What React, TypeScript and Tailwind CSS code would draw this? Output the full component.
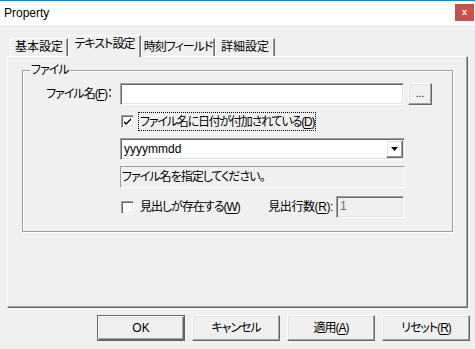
import React from "react";

const sunken =
  "border-t border-l border-b border-r border-t-[#a0a0a0] border-l-[#a0a0a0] border-b-white border-r-white shadow-[inset_1px_1px_0_#696969,inset_-1px_-1px_0_#e3e3e3]";
const raised =
  "border-t border-l border-b border-r border-t-white border-l-white border-b-[#696969] border-r-[#696969] shadow-[inset_-1px_-1px_0_#a0a0a0,inset_1px_1px_0_#e3e3e3]";

function U({ children }: { children: React.ReactNode }) {
  return <span className="underline underline-offset-2 decoration-1">{children}</span>;
}

function Checkbox({ checked }: { checked?: boolean }) {
  return (
    <div className={`w-[13px] h-[13px] bg-white shrink-0 flex items-center justify-center ${sunken}`}>
      {checked && (
        <svg width="9" height="9" viewBox="0 0 9 9">
          <path d="M1 4 L3 6 L8 1 L8 3 L3 8 L1 6 Z" fill="#000" />
        </svg>
      )}
    </div>
  );
}

function Tab({ children, w, active, tight }: { children: React.ReactNode; w: string; active?: boolean; tight?: boolean }) {
  const track = tight ? "tracking-[-1px]" : "tracking-normal";
  if (active) {
    return (
      <div
        className={`relative z-10 -mb-px ${w} ${track} h-[22px] whitespace-nowrap bg-[#f0f0f0] border-t border-l border-r border-t-white border-l-white border-r-[#696969] shadow-[inset_-1px_0_0_#a0a0a0] text-center leading-[14px] pt-px`}
      >
        {children}
      </div>
    );
  }
  return (
    <div
      className={`${w} ${track} h-[18px] whitespace-nowrap bg-[#f0f0f0] border-t border-l border-r border-t-white border-l-white border-r-[#696969] shadow-[inset_-1px_0_0_#a0a0a0] text-center leading-[14px] pt-px`}
    >
      {children}
    </div>
  );
}

function Button({ children, def }: { children: React.ReactNode; def?: boolean }) {
  if (def) {
    return (
      <div className="w-[88px] h-[26px] border border-[#646464] flex">
        <div className={`flex-1 flex items-center justify-center ${raised}`}>{children}</div>
      </div>
    );
  }
  return (
    <div className={`w-[88px] h-[26px] flex items-center justify-center ${raised}`}>{children}</div>
  );
}

export default function App() {
  return (
    <div className="w-[475px] h-[349px] bg-[#f0f0f0] text-[12px] text-black font-['Liberation_Sans','Noto_Sans_CJK_JP',sans-serif] [font-feature-settings:'palt'] tracking-[-1px] overflow-hidden">
      {/* Title bar */}
      <div className="h-[25px] border-t border-[#1883d7] bg-white flex items-start justify-between tracking-normal">
        <span className="pl-[4px] pt-[4px] leading-[16px]">Property</span>
        <div className="mt-[3px] mr-px w-[19px] h-[17px] bg-[#c75050] text-white flex items-center justify-center text-[9px] font-bold leading-none">
          x
        </div>
      </div>

      {/* Tabs */}
      <div className="mt-[10px] h-[21px] pl-[10px] flex items-end">
        <Tab w="w-[58px]">基本設定</Tab>
        <Tab w="w-[73px]" active tight>
          テキスト設定
        </Tab>
        <Tab w="w-[74px]" tight>
          時刻フィールド
        </Tab>
        <Tab w="w-[60px]">詳細設定</Tab>
      </div>

      {/* Panel */}
      <div className="ml-[7px] w-[461px] h-[252px] border-t border-l border-r border-b border-t-white border-l-white border-r-[#696969] border-b-[#696969] shadow-[inset_-1px_-1px_0_#a0a0a0] pt-[13px] pl-[14px]">
        {/* Group box */}
        <div className="relative w-[431px] h-[162px] border border-[#a0a0a0] shadow-[inset_1px_1px_0_#fff,1px_1px_0_#fff] pt-[12px]">
          <span className="absolute left-[7px] -top-[8px] bg-[#f0f0f0] px-px leading-[14px]">ファイル</span>

          {/* Row 1 */}
          <div className="flex items-center h-[22px]">
            <div className="w-[97px] pr-[8px] text-right leading-[14px] whitespace-nowrap">
              ファイル名(<U>F</U>)：
            </div>
            <div className={`w-[284px] h-[22px] bg-white ${sunken}`} />
            <div className={`ml-[4px] w-[24px] h-[22px] flex items-center justify-center leading-none text-[10px] tracking-normal ${raised}`}>
              ...
            </div>
          </div>

          {/* Row 2 */}
          <div className="mt-[7px] pl-[98px] flex items-center h-[19px]">
            <Checkbox checked />
            <div className="ml-[4px] h-[19px] border border-dotted border-black px-px flex items-center leading-[14px] whitespace-nowrap tracking-[-1.2px]">
              ファイル名に日付が付加されている(<U>D</U>)
            </div>
          </div>

          {/* Row 3 combo */}
          <div className="mt-[7px] pl-[97px]">
            <div className={`w-[285px] h-[22px] bg-white flex items-center ${sunken}`}>
              <span className="flex-1 pl-[3px] leading-[14px] tracking-normal">yyyymmdd</span>
              <div className={`mr-px w-[17px] h-[18px] flex items-center justify-center ${raised}`}>
                <svg width="7" height="4" viewBox="0 0 7 4">
                  <path d="M0 0 H7 L3.5 4 Z" fill="#000" />
                </svg>
              </div>
            </div>
          </div>

          {/* Row 4 info */}
          <div className="mt-[6px] pl-[97px]">
            <div className="w-[285px] h-[22px] border-t border-l border-b border-r border-t-[#a0a0a0] border-l-[#a0a0a0] border-b-white border-r-white flex items-center pl-px leading-[14px] whitespace-nowrap">
              ファイル名を指定してください。
            </div>
          </div>

          {/* Row 5 */}
          <div className="mt-[8px] pl-[98px] flex items-center h-[22px]">
            <Checkbox />
            <div className="ml-[6px] leading-[14px] whitespace-nowrap">
              見出しが存在する(<U>W</U>)
            </div>
            <div className="ml-auto mr-[3px] leading-[14px] whitespace-nowrap tracking-[-0.4px]">
              見出行数(<U>R</U>):
            </div>
            <div className={`w-[68px] h-[22px] mr-[48px] text-[#6d6d6d] pl-[3px] pt-[2px] leading-[14px] ${sunken}`}>
              1
            </div>
          </div>
        </div>
      </div>

      {/* Buttons */}
      <div className="mt-[7px] flex justify-end gap-[7px] pr-[5px]">
        <Button def>
          <span className="tracking-normal">OK</span>
        </Button>
        <Button>キャンセル</Button>
        <Button>
          適用(<U>A</U>)
        </Button>
        <Button>
          リセット(<U>R</U>)
        </Button>
      </div>
    </div>
  );
}
